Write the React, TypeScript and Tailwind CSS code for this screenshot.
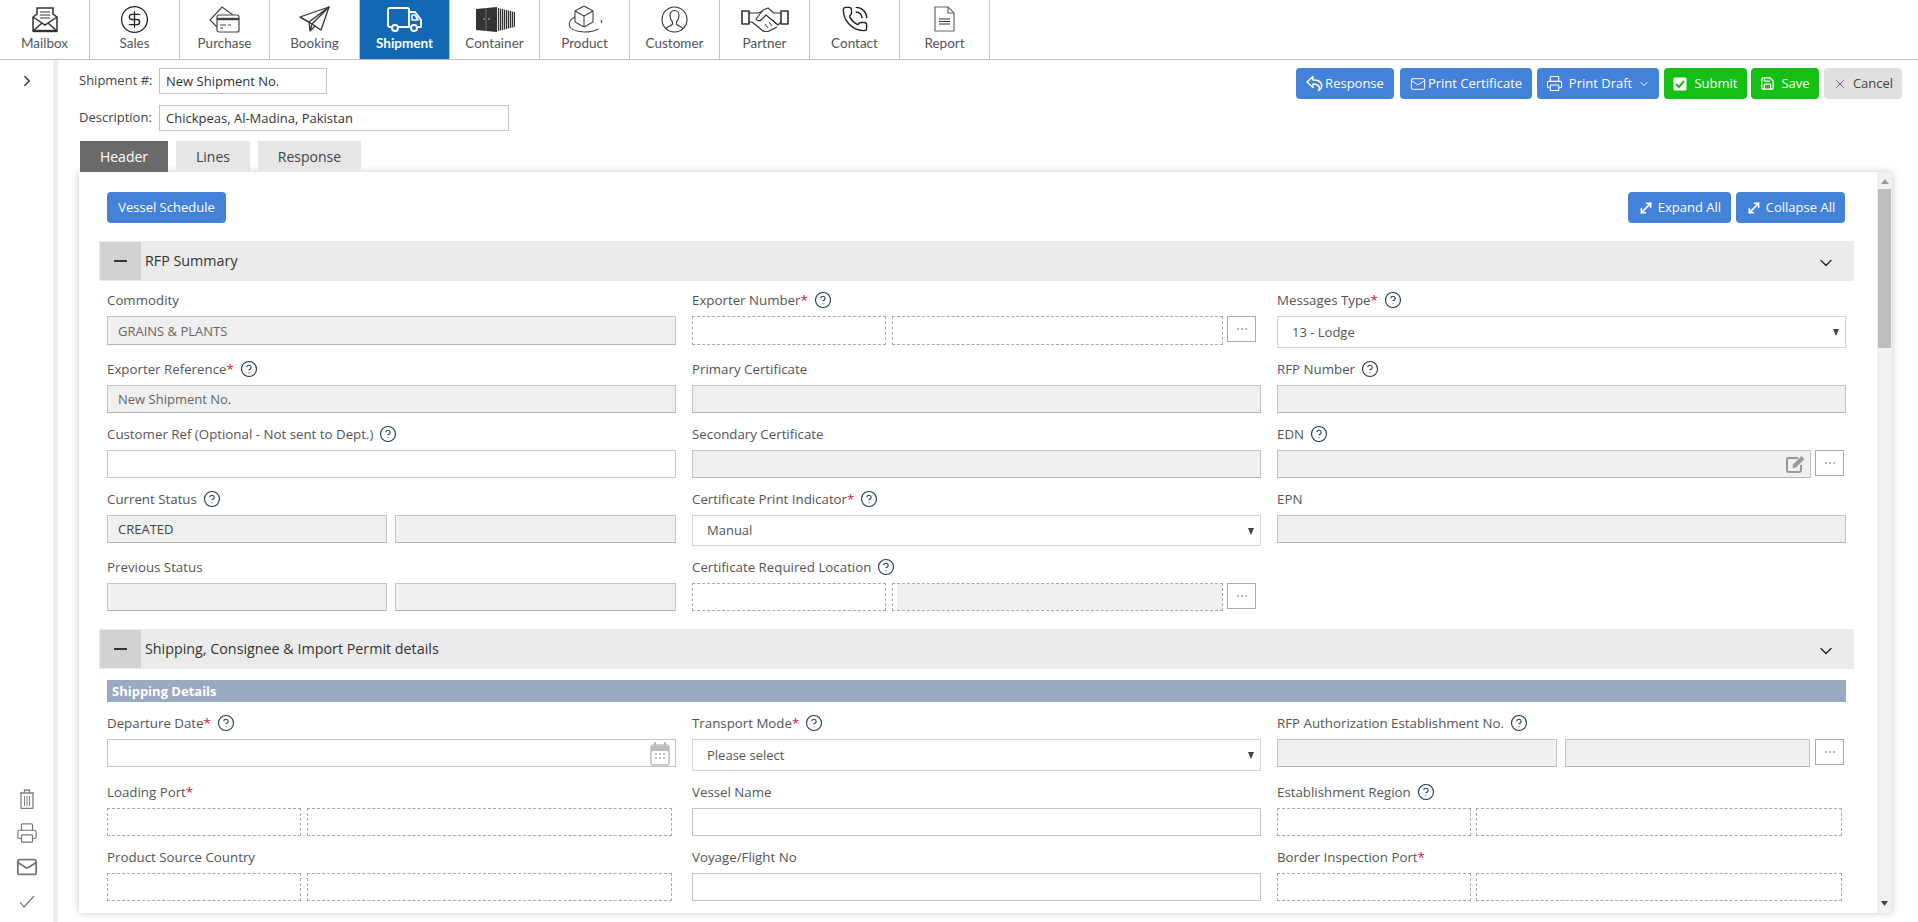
import React from "react";
import {
  ChevronDown,
  ChevronRight,
  CircleDollarSign,
  CircleHelp,
  Ellipsis,
  Mail,
  MoveDiagonal,
  PhoneCall,
  Printer,
  Save,
  X,
} from "lucide-react";

const MailboxIcon = () => (
  <svg width="26" height="27" viewBox="0 0 26 27" fill="none" stroke="#333" strokeWidth="1.5">
    <path d="M1 11 5 8V2h16v6l4 3v14H1z" />
    <path d="M8 6h10M8 9h10M8 12h10" strokeWidth="1" />
    <path d="M1 11l12 8 12-8M1 25l9-8M25 25l-9-8" />
    <path d="M1 25h24" strokeWidth="2.4" />
  </svg>
);

const PurchaseIcon = () => (
  <svg width="31" height="27" viewBox="0 0 31 27" fill="none" stroke="#444" strokeWidth="1.2">
    <path d="M8 21 1 14 13 1l11 8" />
    <rect x="8" y="9" width="22" height="17" rx="2" fill="#fff" />
    <path d="M8 13h22" strokeWidth="2.4" />
    <path d="M11 19h6M11 22h3M19 19h3" />
  </svg>
);

const PlaneIcon = () => (
  <svg width="31" height="26" viewBox="0 0 31 26" fill="none" stroke="#333" strokeWidth="1.3" strokeLinejoin="round">
    <path d="M1 11 30 1l-8 23-9-6z" />
    <path d="M1 11l9 5L30 1 13 18l-2 7-1-9M11 25l5-5" />
  </svg>
);

const TruckIcon = () => (
  <svg width="35" height="25" viewBox="0 0 35 25" fill="none" stroke="#fff" strokeWidth="2" strokeLinejoin="round">
    <path d="M4 20H3a2 2 0 0 1-2-2V3a2 2 0 0 1 2-2h17a2 2 0 0 1 2 2v17H12" />
    <path d="M22 5h6l6 8v7h-3M22 20h-1" />
    <path d="M25 8h3l3 5h-6z" strokeWidth="1.5" />
    <circle cx="8" cy="21" r="3" />
    <circle cx="27" cy="21" r="3" />
  </svg>
);

const ContainerIcon = () => (
  <svg width="40" height="25" viewBox="0 0 40 25">
    <path d="M1 2 22 0v25L1 23z" fill="#333" />
    <path d="M11 1v23" stroke="#888" strokeWidth=".7" />
    <path d="M8 12h2M13 12h2" stroke="#ddd" strokeWidth=".8" />
    <path
      d="M23.500 1v23M25.500 1.500v22M27.500 2v21M29.500 2.500v20M31.500 3v19M33.500 3.500v18M35.500 4v17M37.500 4.500v16M39.500 5v15"
      stroke="#333"
      strokeWidth="1.300"
    />
  </svg>
);

const ProductIcon = () => (
  <svg width="37" height="28" viewBox="0 0 37 28" fill="none" stroke="#444" strokeWidth="1.1" strokeLinejoin="round">
    <path d="M18 1l9 5v11l-9 5-9-5V6z" />
    <path d="M9 6l9 5 9-5M18 11v11" />
    <path d="M9 12C1 16-1 26 18 27c6 0 11-1 14-3" />
    <path d="M35 15l1 3" />
  </svg>
);

const CustomerIcon = () => (
  <svg width="27" height="27" viewBox="0 0 27 27" fill="none" stroke="#333" strokeWidth="1.1">
    <circle cx="13.500" cy="13.500" r="12.500" />
    <path d="M5 23c1-3 6-3 6.500-5v-2C9.500 14 9 11.500 9 9.500 9 6.500 11 4.500 13.500 4.500S18 6.500 18 9.500c0 2-.5 4.500-2.500 6.500v2c.5 2 5.500 2 6.500 5" />
  </svg>
);

const HandshakeIcon = () => (
  <svg width="48" height="25" viewBox="0 0 48 25" fill="none" stroke="#333" strokeWidth="1.2" strokeLinejoin="round">
    <rect x="1" y="4" width="7" height="13" strokeWidth="1.6" />
    <rect x="40" y="4" width="7" height="13" strokeWidth="1.6" />
    <path d="M8 6h9l5-2M40 6h-7l-6-5-5 2-7 9c1 2 4 2 5 1l5-5 12 10 3-3" />
    <path d="M8 15h3l10 8c2 2 5 2 7 1l8-4" />
    <path d="M24 17l3 4M28 15l3 4M32 13l3 4" strokeWidth="1" />
  </svg>
);

const ReportIcon = () => (
  <svg width="21" height="26" viewBox="0 0 21 26" fill="none" stroke="#666" strokeWidth="1.2">
    <path d="M1 1h13l6 6v18H1z" />
    <path d="M14 1v6h6" />
    <path d="M5 13h11M5 15.500h11M5 18h11" stroke="#333" />
  </svg>
);

const TrashIcon = () => (
  <svg width="16" height="20" viewBox="0 0 16 20" fill="none" stroke="#808080" strokeWidth="1.3">
    <path d="M1 4h14M5.500 4V1h5v3" />
    <path d="M2 4v14.500a1 1 0 0 0 1 1h10a1 1 0 0 0 1-1V4" />
    <path d="M5.500 7v10M8 7v10M10.500 7v10" strokeWidth="1" />
  </svg>
);

const CalendarIcon = () => (
  <svg width="20" height="25" viewBox="0 0 20 25" fill="none">
    <rect x="1" y="4" width="18" height="20" rx="2" fill="#fff" stroke="#bcbcbc" strokeWidth="1.500" />
    <path d="M1 5h18v5H1z" fill="#bcbcbc" />
    <path d="M5 1v4M15 1v4" stroke="#bcbcbc" strokeWidth="2" />
    <path
      d="M5 12h2v2H5zM9 12h2v2H9zM13 12h2v2h-2zM5 16h2v2H5zM9 16h2v2H9zM13 16h2v2h-2z"
      fill="#bcbcbc"
    />
  </svg>
);

const ReplyIcon = () => (
  <svg width="17" height="17" viewBox="0 0 17 17" fill="none" stroke="#fff" strokeWidth="1.400" strokeLinejoin="round">
    <path d="M7 1.500 1 7l6 5.500V9c3.500 0 5 1 6 2.500.6 1 .5 2.500-.5 4 3-1.500 3.500-4 3-6C15 6.500 12 5 7 5z" />
  </svg>
);

const SubmitIcon = () => (
  <svg width="14" height="14" viewBox="0 0 14 14">
    <rect x="0.500" y="0.500" width="13" height="13" rx="1.500" fill="#fff" />
    <path d="M3 7l3 3 5-6" fill="none" stroke="#14c014" strokeWidth="2" />
  </svg>
);

const EditIcon = () => (
  <svg width="20" height="18" viewBox="0 0 20 18" fill="none" className="absolute right-[5px] top-[5px]">
    <path d="M12 3H3a2 2 0 0 0-2 2v10a2 2 0 0 0 2 2h10a2 2 0 0 0 2-2v-5" stroke="#999" strokeWidth="2" />
    <path d="M7 9.500 15.500 1l3 3-8.500 8.500-3.500.5z" fill="#999" />
  </svg>
);

const SelectArrow = () => (
  <svg width="6" height="7" viewBox="0 0 6 7" className="absolute right-[6px] top-[12px] pointer-events-none">
    <path d="M0 0h6L3 7z" fill="#444" />
  </svg>
);

const navItems = [
  { label: "Mailbox", icon: <MailboxIcon /> },
  { label: "Sales", icon: <CircleDollarSign size={31} strokeWidth={1} color="#222" /> },
  { label: "Purchase", icon: <PurchaseIcon /> },
  { label: "Booking", icon: <PlaneIcon /> },
  { label: "Shipment", icon: <TruckIcon />, active: true },
  { label: "Container", icon: <ContainerIcon /> },
  { label: "Product", icon: <ProductIcon /> },
  { label: "Customer", icon: <CustomerIcon /> },
  { label: "Partner", icon: <HandshakeIcon /> },
  { label: "Contact", icon: <PhoneCall size={28} strokeWidth={1.2} color="#222" /> },
  { label: "Report", icon: <ReportIcon /> },
];

const Help = () => <CircleHelp size={18} strokeWidth={1.5} color="#1f3a56" className="ml-[6px] -mt-[3px] shrink-0" />;

const Label = ({ text, required, help }: { text: string; required?: boolean; help?: boolean }) => (
  <div className="h-[20px] mb-[5px] flex items-center text-[13.300px] font-medium text-[#555]">
    <span>{text}</span>
    {required && <span className="text-[#e0102f]">*</span>}
    {help && <Help />}
  </div>
);

const Disabled = ({ value, className = "w-full" }: { value?: string; className?: string }) => (
  <input
    readOnly
    value={value ?? ""}
    className={`h-[28px] border border-[#c4c4c4] border-b-[#b4b4b4] bg-[#efefef] px-[10px] text-[13px] text-[#666] outline-none ${className}`}
  />
);

const TextBox = () => (
  <input readOnly className="h-[28px] w-full border border-[#c4c4c4] bg-white px-[10px] text-[13px] outline-none" />
);

const Dashed = ({ className, filled }: { className: string; filled?: boolean }) => (
  <div className={`h-[28px] border border-dashed border-[#aaaaaa] bg-white ${filled ? "pl-[4px]" : ""} ${className}`}>
    {filled && <div className="h-full bg-[#efefef]" />}
  </div>
);

const Dots = () => (
  <button className="h-[26px] w-[29px] shrink-0 border border-[#aaaaaa] bg-white flex items-center justify-center">
    <Ellipsis size={14} strokeWidth={1.5} color="#999" />
  </button>
);

const Dropdown = ({ value }: { value: string }) => (
  <div className="relative h-[32px] w-full border border-[#d0d5da] bg-white pl-[14px] flex items-center text-[13px] text-[#555]">
    <span className="mt-[1px]">{value}</span>
    <SelectArrow />
  </div>
);

const Section = ({ title }: { title: string }) => (
  <div className="h-[40px] bg-[#ebebeb] flex items-center pl-px pr-[18px]">
    <div className="h-[38px] w-[41px] bg-[#d2d2d2] flex items-center justify-center">
      <div className="h-[2px] w-[13px] bg-[#333]" />
    </div>
    <span className="ml-[4px] -mt-px text-[14.300px] text-[#333]">{title}</span>
    <ChevronDown size={20} strokeWidth={1.5} color="#222" className="ml-auto mt-[3px]" />
  </div>
);

const ActionButton = ({
  className,
  children,
}: {
  className: string;
  children: React.ReactNode;
}) => (
  <button className={`h-[31px] rounded-[4px] flex items-center justify-center text-[13px] ${className}`}>
    {children}
  </button>
);

export default function App() {
  return (
    <div className="h-[922px] overflow-hidden bg-white flex flex-col font-['Open_Sans',sans-serif]">
      {/* Top navigation */}
      <nav className="h-[60px] shrink-0 border-b border-[#c4c4c4] flex font-['Lato',sans-serif]">
        {navItems.map((item) => (
          <div
            key={item.label}
            className={`w-[90px] h-[59px] flex flex-col items-center border-r border-[#c4c4c4] ${
              item.active ? "bg-[#1268b3] text-white font-bold" : "text-[#555]"
            }`}
          >
            <div className="h-[34px] mt-[2px] flex items-center justify-center">{item.icon}</div>
            <span className="text-[13.500px] leading-[14px]">{item.label}</span>
          </div>
        ))}
      </nav>

      <div className="flex flex-1 min-h-0">
        {/* Left rail */}
        <aside className="w-[58px] shrink-0 border-r-[5px] border-[#eeeeee] flex flex-col items-center pb-[4px]">
          <ChevronRight size={18} strokeWidth={1.8} color="#333" className="mt-[12px]" />
          <div className="mt-auto flex flex-col items-center">
            <div className="h-[34px] flex items-center">
              <TrashIcon />
            </div>
            <div className="h-[34px] flex items-center">
              <Printer size={22} strokeWidth={1.3} color="#777" />
            </div>
            <div className="h-[34px] flex items-center">
              <Mail size={22} strokeWidth={2} color="#777" />
            </div>
            <div className="h-[34px] flex items-center">
              <svg width="16" height="13" viewBox="0 0 16 13" fill="none" stroke="#777" strokeWidth="1.2">
                <path d="M1 7l4 5L15 1" />
              </svg>
            </div>
          </div>
        </aside>

        <main className="flex-1 min-w-0 pl-[21px] pr-[16px] pt-[8px]">
          <div className="flex justify-between">
            <div>
              <div className="flex items-center h-[26px]">
                <span className="w-[80px] text-[13px] font-medium text-[#444]">Shipment #:</span>
                <input
                  readOnly
                  value="New Shipment No."
                  className="h-[26px] w-[168px] border border-[#c4c4c4] px-[6px] text-[13px] text-[#333] outline-none"
                />
              </div>
              <div className="flex items-center h-[26px] mt-[11px]">
                <span className="w-[80px] text-[13px] font-medium text-[#444]">Description:</span>
                <input
                  readOnly
                  value="Chickpeas, Al-Madina, Pakistan"
                  className="h-[26px] w-[350px] border border-[#c4c4c4] px-[6px] text-[13px] text-[#333] outline-none"
                />
              </div>
            </div>

            <div className="flex items-start">
              <ActionButton className="w-[98px] bg-[#4482d9] text-white gap-[2px]">
                <ReplyIcon />
                Response
              </ActionButton>
              <ActionButton className="w-[132px] ml-[6px] bg-[#4482d9] text-white gap-[2px]">
                <Mail size={16} strokeWidth={1.5} />
                Print Certificate
              </ActionButton>
              <ActionButton className="w-[122px] ml-[5px] bg-[#4482d9] text-white gap-[6px]">
                <Printer size={17} strokeWidth={1.5} />
                Print Draft
                <ChevronDown size={12} strokeWidth={2} />
              </ActionButton>
              <ActionButton className="w-[83px] ml-[5px] bg-[#14c014] text-white gap-[7px]">
                <SubmitIcon />
                Submit
              </ActionButton>
              <ActionButton className="w-[68px] ml-[4px] bg-[#14c014] text-white gap-[6px]">
                <Save size={15} strokeWidth={2} />
                Save
              </ActionButton>
              <ActionButton className="w-[78px] ml-[5px] bg-[#e0e0e0] text-[#444] gap-[6px]">
                <X size={14} strokeWidth={1.3} />
                Cancel
              </ActionButton>
            </div>
          </div>

          {/* Tabs */}
          <div className="mt-[10px] ml-px flex gap-[8px] text-[14px]">
            <div className="h-[31px] w-[88px] bg-[#6a6a6a] text-white flex items-center justify-center">Header</div>
            <div className="h-[31px] w-[74px] bg-[#e6e6e6] text-[#444] flex items-center justify-center">Lines</div>
            <div className="h-[31px] w-[103px] bg-[#e6e6e6] text-[#444] flex items-center justify-center">Response</div>
          </div>

          {/* Form panel */}
          <div className="h-[741px] mr-[10px] flex bg-white shadow-[0_0_7px_rgba(0,0,0,0.22)]">
            <div className="flex-1 min-w-0 overflow-hidden pl-[20px] pr-[23px] pt-[20px]">
              <div className="flex pl-[8px] pr-[9px] mb-[18px]">
                <ActionButton className="w-[119px] bg-[#4482d9] text-white">Vessel Schedule</ActionButton>
                <ActionButton className="w-[103px] ml-auto bg-[#4482d9] text-white gap-[4px]">
                  <MoveDiagonal size={16} strokeWidth={2.4} />
                  Expand All
                </ActionButton>
                <ActionButton className="w-[109px] ml-[5px] bg-[#4482d9] text-white gap-[4px]">
                  <MoveDiagonal size={16} strokeWidth={2.4} />
                  Collapse All
                </ActionButton>
              </div>

              <Section title="RFP Summary" />

              <div className="grid grid-cols-3 gap-x-[16px] gap-y-[12px] px-[8px] mt-[10px] mb-[18px] items-start">
                <div>
                  <Label text="Commodity" />
                  <Disabled value="GRAINS & PLANTS" className="w-full h-[29px]" />
                </div>
                <div>
                  <Label text="Exporter Number" required help />
                  <div className="flex items-start">
                    <Dashed className="w-[194px] h-[29px]" />
                    <Dashed className="w-[331px] ml-[6px] h-[29px]" />
                    <div className="ml-[4px]">
                      <Dots />
                    </div>
                  </div>
                </div>
                <div>
                  <Label text="Messages Type" required help />
                  <Dropdown value="13 - Lodge" />
                </div>

                <div>
                  <Label text="Exporter Reference" required help />
                  <Disabled value="New Shipment No." />
                </div>
                <div>
                  <Label text="Primary Certificate" />
                  <Disabled />
                </div>
                <div>
                  <Label text="RFP Number" help />
                  <Disabled />
                </div>

                <div>
                  <Label text="Customer Ref (Optional - Not sent to Dept.)" help />
                  <TextBox />
                </div>
                <div>
                  <Label text="Secondary Certificate" />
                  <Disabled />
                </div>
                <div>
                  <Label text="EDN" help />
                  <div className="flex items-start">
                    <div className="relative w-[534px]">
                      <Disabled />
                      <EditIcon />
                    </div>
                    <div className="ml-[4px]">
                      <Dots />
                    </div>
                  </div>
                </div>

                <div>
                  <Label text="Current Status" help />
                  <div className="flex gap-[8px]">
                    <Disabled value="CREATED" className="w-[280px] !text-[#444]" />
                    <Disabled className="w-[281px]" />
                  </div>
                </div>
                <div>
                  <Label text="Certificate Print Indicator" required help />
                  <div className="[&>div]:h-[31px]">
                    <Dropdown value="Manual" />
                  </div>
                </div>
                <div>
                  <Label text="EPN" />
                  <Disabled />
                </div>

                <div>
                  <Label text="Previous Status" />
                  <div className="flex gap-[8px]">
                    <Disabled className="w-[280px]" />
                    <Disabled className="w-[281px]" />
                  </div>
                </div>
                <div>
                  <Label text="Certificate Required Location" help />
                  <div className="flex items-start">
                    <Dashed className="w-[194px]" />
                    <Dashed className="w-[331px] ml-[6px]" filled />
                    <div className="ml-[4px]">
                      <Dots />
                    </div>
                  </div>
                </div>
              </div>

              <Section title="Shipping, Consignee & Import Permit details" />

              <div className="mx-[8px] mt-[11px] mb-[12px] h-[22px] bg-[#9ba9c0] pl-[5px] pt-px flex items-center text-[13px] font-bold text-white">
                Shipping Details
              </div>

              <div className="grid grid-cols-3 gap-x-[16px] gap-y-[12px] px-[8px] items-start">
                <div>
                  <Label text="Departure Date" required help />
                  <div className="relative">
                    <TextBox />
                    <div className="absolute right-[6px] top-[2px]">
                      <CalendarIcon />
                    </div>
                  </div>
                </div>
                <div>
                  <Label text="Transport Mode" required help />
                  <Dropdown value="Please select" />
                </div>
                <div>
                  <Label text="RFP Authorization Establishment No." help />
                  <div className="flex items-start">
                    <Disabled className="w-[280px]" />
                    <Disabled className="w-[245px] ml-[8px]" />
                    <div className="ml-[5px]">
                      <Dots />
                    </div>
                  </div>
                </div>

                <div>
                  <Label text="Loading Port" required />
                  <div className="flex">
                    <Dashed className="w-[194px]" />
                    <Dashed className="w-[365px] ml-[6px]" />
                  </div>
                </div>
                <div>
                  <Label text="Vessel Name" />
                  <TextBox />
                </div>
                <div>
                  <Label text="Establishment Region" help />
                  <div className="flex">
                    <Dashed className="w-[194px]" />
                    <Dashed className="w-[366px] ml-[5px]" />
                  </div>
                </div>

                <div>
                  <Label text="Product Source Country" />
                  <div className="flex">
                    <Dashed className="w-[194px]" />
                    <Dashed className="w-[365px] ml-[6px]" />
                  </div>
                </div>
                <div>
                  <Label text="Voyage/Flight No" />
                  <TextBox />
                </div>
                <div>
                  <Label text="Border Inspection Port" required />
                  <div className="flex">
                    <Dashed className="w-[194px]" />
                    <Dashed className="w-[366px] ml-[5px]" />
                  </div>
                </div>
              </div>
            </div>

            {/* Scrollbar */}
            <div className="w-[15px] shrink-0 bg-[#f1f1f1] flex flex-col items-center">
              <svg width="8" height="5" viewBox="0 0 8 5" className="mt-[7px]">
                <path d="M4 0l4 5H0z" fill="#9a9a9a" />
              </svg>
              <div className="mt-[5px] h-[159px] w-[13px] bg-[#bdbdbd]" />
              <svg width="7" height="5" viewBox="0 0 7 5" className="mt-auto mb-[7px]">
                <path d="M0 0h7L3.500 5z" fill="#444" />
              </svg>
            </div>
          </div>
        </main>
      </div>
    </div>
  );
}
